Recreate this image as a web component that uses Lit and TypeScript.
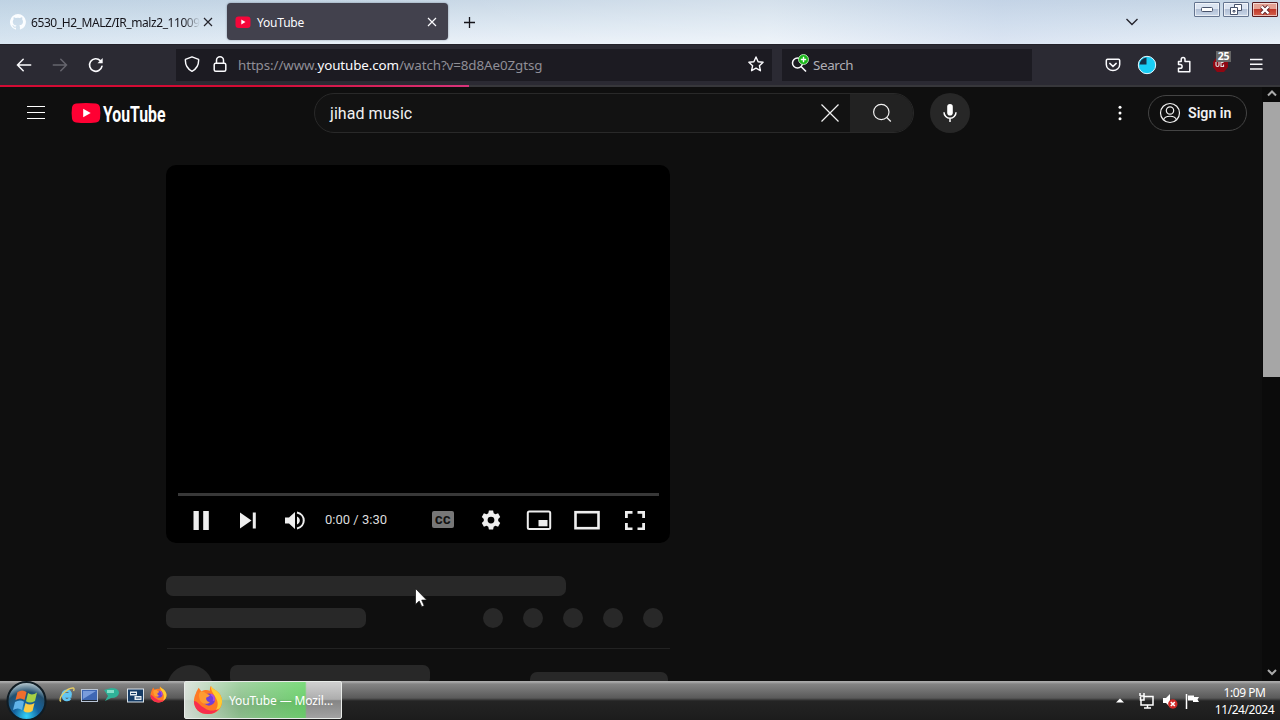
import { LitElement, html, css, svg } from 'lit';
import { customElement, property } from 'lit/decorators.js';

const ytBadge = html`
  <svg width="16" height="16" viewBox="0 0 16 16">
    <rect x="0.5" y="2.5" width="15" height="11.5" rx="3" fill="#f5063a" />
    <path d="M6.3 5.6v5l4.2-2.5z" fill="#fff" />
  </svg>
`;

const firefoxLogo = (size: number) => html`
  <svg width=${size} height=${size} viewBox="0 0 32 32">
    <path d="M3 9C4 6 5 5 6 3l3 4c3-2 6-2 9-1 0-2 0-3 1-5 2 3 4 4 6 5 4 3 6 7 6 11 0 8-6 14-15 14S1 25 1 17c0-3 1-6 2-8z" fill="#ff7a24" />
    <path d="M19 1c2 3 4 4 6 5 4 3 6 7 6 11 0 5-3 10-8 12 4-5 4-10 2-14-2-5-6-8-6-14z" fill="#ffcb30" />
    <path d="M1 17c0 8 6 14 15 14 5 0 9-2 12-6-5 3-11 3-15 0-6-3-8-8-12-8z" fill="#f72d4d" />
    <circle cx="17" cy="15.5" r="6.5" fill="#7140d8" />
    <path d="M7 8c2-2 5-1 7 1l4 2c-1 2-4 2-4 3 0 2 1 4 4 4-3 4-10 2-11-3-1-3-1-5 0-7z" fill="#ff9c30" />
    <path d="M19 10c3 1 4 4 3 7" fill="none" stroke="#b04de0" stroke-width="2" />
  </svg>
`;

@customElement('browser-chrome')
export class BrowserChrome extends LitElement {
  @property({ type: String }) search = 'Search';

  static styles = css`
    :host {
      display: block;
      font-family: 'Noto Sans', sans-serif;
    }

    svg {
      display: block;
      flex-shrink: 0;
    }

    .tabs {
      height: 44px;
      box-sizing: border-box;
      display: flex;
      background: linear-gradient(90deg, rgba(170, 200, 222, 0.25), rgba(255, 255, 255, 0) 30%, rgba(255, 255, 255, 0.25) 60%, rgba(190, 205, 232, 0.3) 78%, rgba(255, 255, 255, 0)),
        linear-gradient(#c6d6e5, #d9e5f0 55%, #e9f0f8);
    }

    .tab {
      box-sizing: border-box;
      height: 37px;
      margin-top: 3px;
      border-radius: 4px;
      display: flex;
      align-items: center;
      font-size: 12px;
      letter-spacing: -0.2px;
      color: #15141a;
      white-space: nowrap;
    }

    .tab.idle {
      width: 221px;
      padding: 0 9px 0 10px;
      margin-right: 6px;
      letter-spacing: -0.42px;
    }

    .tab.active {
      width: 221px;
      padding: 0 10px 0 8px;
      color: #fbfbfe;
      background: #42414d;
      box-shadow: 0 0 2px rgba(60, 70, 90, 0.6);
    }

    .title {
      flex: 1;
      padding-top: 2px;
      margin-left: 6px;
    }

    .idle .title {
      margin-left: 5px;
      margin-right: 3px;
      -webkit-mask-image: linear-gradient(90deg, #000 90%, transparent);
      mask-image: linear-gradient(90deg, #000 90%, transparent);
    }

    .new-tab {
      margin: 16px 0 0 15px;
    }

    .list-tabs {
      margin: 17px 55px 0 auto;
    }

    .window-buttons {
      display: flex;
      gap: 3px;
      padding: 2px 2px 0 0;
    }

    .window-buttons span {
      width: 26px;
      height: 15px;
      box-sizing: border-box;
      border: 1px solid #64748f;
      border-radius: 1px;
      box-shadow: inset 0 0 0 1px rgba(255, 255, 255, 0.6);
      background: linear-gradient(#dbe4f1 45%, #b2c0d6 50%, #c9d7e8);
      display: flex;
      align-items: center;
      justify-content: center;
    }

    .window-buttons .close {
      border-color: #571b20;
      background: linear-gradient(#e4a294 45%, #c2392a 50%, #d2604c);
    }

    .toolbar {
      height: 41px;
      box-sizing: border-box;
      border-top: 1px solid #232129;
      background: #2b2a33;
      display: flex;
      align-items: center;
      padding: 0 16px;
    }

    .nav {
      width: 160px;
      display: flex;
      gap: 20px;
    }

    .field {
      height: 32px;
      background: #1c1b22;
      display: flex;
      align-items: center;
      box-sizing: border-box;
      font-size: 13.4px;
      line-height: 20px;
      color: #8f8e96;
    }

    .field svg {
      position: relative;
      top: -1px;
    }

    .url {
      width: 596px;
      padding: 0 8px;
      margin-right: 10px;
    }

    .url svg + svg {
      margin-left: 12px;
    }

    .address {
      flex: 1;
      margin-left: 10px;
      letter-spacing: -0.11px;
    }

    .address b {
      font-weight: 400;
      color: #fbfbfe;
    }

    .search {
      width: 250px;
      padding: 0 8px;
      gap: 3px;
      color: #b0afb6;
      letter-spacing: -0.35px;
    }

    .actions {
      margin-left: auto;
      display: flex;
      align-items: center;
    }

    .actions svg,
    .blocker {
      margin-left: 16px;
    }

    .actions .puzzle {
      margin-left: 17px;
    }

    .blocker {
      position: relative;
      width: 20px;
      height: 20px;
      margin-right: 2px;
    }

    .blocker svg {
      margin: 0;
    }

    .badge {
      position: absolute;
      left: 6px;
      top: -4px;
      width: 15px;
      height: 11px;
      line-height: 11px;
      text-align: center;
      font-size: 10.5px;
      font-weight: 700;
      color: #fff;
      background: #666;
      letter-spacing: -0.3px;
    }

    .loading {
      height: 2px;
      background: #37373b;
    }

    .loading div {
      width: 469px;
      height: 2px;
      background: linear-gradient(90deg, #d30b34 55%, #d9347b);
    }
  `;

  render() {
    return html`
      <div class="tabs">
        <div class="tab idle">
          <svg width="16" height="16" viewBox="0 0 16 16">
            <path d="M8 0a8 8 0 0 0-2.5 15.6c.4.1.5-.2.5-.4v-1.5c-2.2.5-2.7-.9-2.9-1.3-.2-.4-.6-.8-.9-1 .8-.5 1.4.3 1.7.7.5.9 1.3.7 2.1.5.1-.6.3-.9.5-1.1-1.8-.3-3.7-1-3.7-4 0-.8.3-1.6.8-2.1 0-.5-.2-1.3.1-2.2 0 0 .7-.2 2.2.8a7.5 7.5 0 0 1 4 0c1.5-1 2.2-.8 2.2-.8.4.9.2 1.7.1 2.2.5.5.8 1.2.8 2.1 0 3-1.9 3.7-3.7 3.9.4.4.6.8.6 1.6v2.2c0 .2.1.5.5.4A8 8 0 0 0 8 0z" fill="#fbfdff" />
          </svg>
          <span class="title">6530_H2_MALZ/IR_malz2_11009</span>
          <svg width="10" height="10" viewBox="0 0 10 10"><path d="M1 1l8 8M9 1L1 9" stroke="#25242c" stroke-width="1.2" /></svg>
        </div>
        <div class="tab active">
          ${ytBadge}
          <span class="title">YouTube</span>
          <svg width="12" height="10" viewBox="0 0 12 10"><path d="M2 1l8 8M10 1L2 9" stroke="#fbfbfe" stroke-width="1.2" /></svg>
        </div>
        <svg class="new-tab" width="13" height="13" viewBox="0 0 13 13"><path d="M6.5 1v11M1 6.5h11" stroke="#15141a" stroke-width="1.3" /></svg>
        <svg class="list-tabs" width="14" height="10" viewBox="0 0 14 10"><path d="M1.5 2L7 7.5 12.5 2" fill="none" stroke="#25242c" stroke-width="1.4" /></svg>
        <div class="window-buttons">
          <span><svg width="12" height="5" viewBox="0 0 12 5"><rect x="0.5" y="0.5" width="11" height="4" rx="1" fill="#fff" stroke="#48536b" /></svg></span>
          <span>
            <svg width="12" height="11" viewBox="0 0 12 11">
              <path d="M4.5.5h7v6h-7z" fill="#fff" stroke="#48536b" />
              <path d="M.5 3.5h7v7h-7z" fill="#fff" stroke="#48536b" />
              <path d="M3 6.5h2V8H3z" fill="none" stroke="#48536b" />
            </svg>
          </span>
          <span class="close"><svg width="12" height="10" viewBox="0 0 12 10"><path d="M2.5 1.5l7 7M9.5 1.5l-7 7" stroke="#5b2329" stroke-width="4" /><path d="M2.5 1.5l7 7M9.5 1.5l-7 7" stroke="#fff" stroke-width="2.4" /></svg></span>
        </div>
      </div>
      <div class="toolbar">
        <div class="nav">
          <svg width="16" height="16" viewBox="0 0 16 16" fill="none" stroke="#fbfbfe" stroke-width="1.5" stroke-linecap="round"><path d="M1.5 8h13.2M7.2 2.2L1.5 8l5.7 5.8" /></svg>
          <svg width="16" height="16" viewBox="0 0 16 16" fill="none" stroke="#66656e" stroke-width="1.5" stroke-linecap="round"><path d="M1.3 8h13.2M8.8 2.2L14.5 8l-5.7 5.8" /></svg>
          <svg width="16" height="16" viewBox="0 0 16 16" fill="none" stroke="#fbfbfe" stroke-width="1.6" stroke-linecap="round">
            <path d="M14 9.2A6.3 6.3 0 1 1 12.3 3.6" />
            <path d="M14.7 1v5.2H9.5z" fill="#fbfbfe" stroke="none" />
          </svg>
        </div>
        <div class="field url">
          <svg width="16" height="16" viewBox="0 0 16 16" fill="none" stroke="#fbfbfe" stroke-width="1.4"><path d="M8 .8l6.6 2.5c.3 5-1.8 9.5-6.6 12-4.8-2.500-6.900-7-6.600-12z" stroke-linejoin="round" /></svg>
          <svg width="16" height="16" viewBox="0 0 16 16" fill="none" stroke="#fbfbfe" stroke-width="1.5"><rect x="2.2" y="7.2" width="11.6" height="8" rx="1.5" /><path d="M4.5 7V4.3a3.5 3.5 0 0 1 7 0V7" /></svg>
          <span class="address">https://www.<b>youtube.com</b>/watch?v=8d8Ae0Zgtsg</span>
          <svg width="16" height="16" viewBox="0 0 16 16" fill="none" stroke="#fbfbfe" stroke-width="1.4"><path d="M8 1l2.1 4.7 5 .5-3.7 3.5 1 5L8 12.2l-4.4 2.5 1-5L.9 6.2l5-.5z" stroke-linejoin="round" /></svg>
        </div>
        <div class="field search">
          <svg width="20" height="20" viewBox="0 0 20 20" fill="none">
            <circle cx="7.5" cy="9" r="5" stroke="#fbfbfe" stroke-width="1.5" />
            <path d="M11 12.5l5 5" stroke="#fbfbfe" stroke-width="1.6" />
            <circle cx="13.5" cy="5.5" r="5" fill="#18b818" stroke="#d6f5d6" stroke-width="0.8" />
            <path d="M13.5 2.8v5.4M10.8 5.5h5.4" stroke="#fff" stroke-width="1.4" />
          </svg>
          <span>${this.search}</span>
        </div>
        <div class="actions">
          <svg width="16" height="16" viewBox="0 0 16 16" fill="none" stroke="#fbfbfe" stroke-width="1.5" stroke-linecap="round"><path d="M2.500 2.200h11c.7 0 1.200.5 1.200 1.200v4a6.700 6.200 0 0 1-13.400 0v-4c0-.7.5-1.200 1.200-1.200z" /><path d="M4.800 6.400L8 9.400l3.200-3" /></svg>
          <svg width="20" height="20" viewBox="0 0 20 20">
            <circle cx="10" cy="10" r="8.700" fill="#18cdf5" stroke="#e9f9ff" stroke-width="1" />
            <path d="M9.500 9.500V2.500a7.500 7.500 0 0 0-7 7z" fill="#143148" />
          </svg>
          <svg class="puzzle" width="20" height="20" viewBox="0 0 20 20" fill="none" stroke="#fbfbfe" stroke-width="1.5" stroke-linejoin="round"><path d="M7.200 6.500V4.500a1.900 1.900 0 0 1 3.800 0v2h4.800v10.300H4.500v-3.500h1.700a1.900 1.900 0 0 0 0-3.800H4.500v-3z" /></svg>
          <div class="blocker">
            <svg width="20" height="20" viewBox="0 0 20 20"><path d="M6 3h8l4 4v5l-4 5H7l-4-5V7z" fill="#8f0712" /><path d="M6 7v3q0 1.500 1.500 1.500T9 10V7M13.500 7.500H11v4h2.500V9.500" fill="none" stroke="#ddd" stroke-width="1.200" /></svg>
            <span class="badge">25</span>
          </div>
          <svg width="16" height="16" viewBox="0 0 16 16" stroke="#fbfbfe" stroke-width="1.500"><path d="M2 2.500h12.500M2 7.200h12.500M2 12h12.500" /></svg>
        </div>
      </div>
      <div class="loading"><div></div></div>
    `;
  }
}

const icons = {
  pause: svg`<path d="M4.500 3h5.300v19H4.500zM14.200 3h5.600v19h-5.600z" />`,
  next: svg`<path d="M4 4.500l11.500 8L4 20.500zM16.800 4.500h3v16h-3z" />`,
  volume: svg`<path d="M2 9.500v6h4l6 5.500V4L6 9.500zM14 8.500v8c3.800-1.400 3.800-6.600 0-8z" /><path d="M14 4.600c9 1.800 9 14 0 15.800" fill="none" stroke="#eee" stroke-width="2" />`,
  settings: svg`<path fill-rule="evenodd" d="M9.900 2.500h4.200l.6 2.700 1.700 1 2.700-.9 2.100 3.700-2 1.900v2.200l2 1.900-2.100 3.700-2.700-.9-1.700 1-.6 2.700H9.900l-.6-2.700-1.700-1-2.700.9L2.800 15l2-1.900v-2.200L2.800 9l2.100-3.700 2.700.9 1.700-1zM12 8.700a3.400 3.400 0 1 0 0 6.800 3.400 3.400 0 0 0 0-6.800z" />`,
  miniplayer: svg`<rect x="0.800" y="3.500" width="22.400" height="17.500" rx="1.500" fill="none" stroke="#eee" stroke-width="2" /><path d="M11.500 12h9v6.300h-9z" />`,
  theater: svg`<rect x="0.500" y="4.200" width="23" height="16" fill="none" stroke="#eee" stroke-width="2.600" />`,
  fullscreen: svg`<path d="M2 3h7.500v2.700H4.800v4.300H2zM14.500 3H22v7h-2.800V5.700h-4.700zM2 15h2.800v4.500h4.700V22H2zM19.200 15H22v7h-7.500v-2.500h4.700z" />`,
};

@customElement('watch-page')
export class WatchPage extends LitElement {
  @property({ type: String }) query = '';
  @property({ type: String }) time = '0:00 / 3:30';

  static styles = css`
    :host {
      display: flex;
      background: #0f0f0f;
      font-family: Roboto, sans-serif;
      color: #f1f1f1;
      overflow: hidden;
    }

    svg {
      display: block;
      flex-shrink: 0;
      overflow: visible;
    }

    main {
      flex: 1;
      min-width: 0;
    }

    header {
      height: 52px;
      display: flex;
      align-items: center;
      padding: 0 15px 0 26px;
    }

    .logo {
      margin-left: 25px;
    }

    .logo text {
      font: 700 22px Roboto, sans-serif;
    }

    .searchbox {
      margin-left: 147px;
      width: 600px;
      height: 40px;
      box-sizing: border-box;
      border: 1px solid #292929;
      border-radius: 20px;
      display: flex;
      align-items: center;
      background: #121212;
      overflow: hidden;
    }

    .query {
      flex: 1;
      padding-left: 15px;
      font-size: 16px;
      letter-spacing: 0.06px;
    }

    .go {
      width: 63px;
      height: 40px;
      margin-left: 10px;
      background: #222;
      display: flex;
      align-items: center;
      justify-content: center;
    }

    .mic {
      width: 40px;
      height: 40px;
      margin: 0 auto 0 16px;
      border-radius: 50%;
      background: #272727;
      display: flex;
      align-items: center;
      justify-content: center;
    }

    .signin {
      box-sizing: border-box;
      width: 99px;
      height: 36px;
      margin-left: 26px;
      border: 1px solid #444;
      border-radius: 18px;
      display: flex;
      align-items: center;
      gap: 7px;
      padding-left: 10px;
      font-size: 14.2px;
      font-weight: 600;
      white-space: nowrap;
    }

    .watch {
      width: 504px;
      margin: 26px 0 0 166px;
    }

    .player {
      height: 378px;
      box-sizing: border-box;
      border-radius: 10px;
      background: #000;
      display: flex;
      flex-direction: column;
      justify-content: flex-end;
      padding: 0 11px 0 12px;
    }

    .seek {
      height: 3px;
      background: #383838;
    }

    .controls {
      height: 47px;
      display: flex;
      align-items: center;
    }

    .control {
      width: 48px;
      display: flex;
      justify-content: center;
      fill: #eee;
    }

    .control.left {
      width: 46.7px;
    }

    .time {
      flex: 1;
      margin-left: 7px;
      font-size: 13px;
      color: #ddd;
    }

    .cc {
      width: 22px;
      height: 17px;
      border-radius: 2px;
      background: #777;
      color: #111;
      font-size: 11.5px;
      line-height: 18px;
      font-weight: 900;
      letter-spacing: 0.5px;
      text-align: center;
    }

    .row {
      display: flex;
      align-items: center;
    }

    .bone {
      background: #282828;
      border-radius: 7px;
      height: 20px;
    }

    .headline {
      width: 400px;
      margin-top: 33px;
    }

    .views {
      width: 200px;
      margin-right: auto;
    }

    .meta {
      margin-top: 12px;
      gap: 20px;
      padding-right: 7px;
    }

    .dot {
      width: 20px;
      height: 20px;
      border-radius: 50%;
      background: #282828;
    }

    .channel {
      margin: 20px 0 0 1px;
      border-top: 1px solid #222;
      padding-top: 16px;
      align-items: flex-start;
    }

    .avatar {
      width: 46px;
      height: 46px;
      border-radius: 50%;
      background: #282828;
    }

    .name {
      width: 200px;
      margin: 0 auto 0 17px;
    }

    .subscribe {
      width: 138px;
      height: 36px;
      margin: 7px 2px 0 0;
    }

    .scroll {
      width: 18px;
      background: #0b0b0b;
      display: flex;
      flex-direction: column;
      align-items: flex-end;
    }

    .thumb {
      width: 17px;
      height: 275px;
      margin: 2px 0 auto;
      background: #a6a6a6;
    }

    .arrow {
      margin-right: 2px;
      fill: none;
      stroke: #aaa;
      stroke-width: 2;
    }
  `;

  private icon(name: keyof typeof icons, side = '') {
    return html`<div class="control ${side}"><svg width="24" height="24" viewBox="0 0 24 24">${icons[name]}</svg></div>`;
  }

  render() {
    return html`
      <main>
        <header>
          <svg width="20" height="16" viewBox="0 0 20 16" stroke="#fff" stroke-width="1"><path d="M1 1.500h18M1 7.500h18M1 13.500h18" /></svg>
          <svg class="logo" width="96" height="24" viewBox="0 0 96 24">
            <path d="M5 2.500Q15 1.500 25 2.500 28.500 3 29 6.500 29.800 12 29 17.500 28.500 21 25 21.500 15 22.500 5 21.500 1.500 21 1 17.500.2 12 1 6.500 1.500 3 5 2.500z" fill="#ff0033" />
            <path d="M12.200 7.800v8.400l7.500-4.200z" fill="#fff" />
            <text x="32" y="20.500" textLength="62.500" lengthAdjust="spacingAndGlyphs" fill="#fff">YouTube</text>
          </svg>
          <div class="searchbox">
            <span class="query">${this.query}</span>
            <svg width="20" height="20" viewBox="0 0 20 20" stroke="#f1f1f1" stroke-width="1.200"><path d="M1.500 1.500l17 17M18.500 1.500l-17 17" /></svg>
            <div class="go"><svg width="20" height="20" viewBox="0 0 20 20" fill="none" stroke="#f1f1f1" stroke-width="1.200"><circle cx="9.300" cy="9" r="7.700" /><path d="M14.800 14.500l4 4" /></svg></div>
          </div>
          <div class="mic">
            <svg width="20" height="20" viewBox="0 0 20 20"><rect x="7.200" y="1" width="5.600" height="11.500" rx="2.800" fill="#fff" /><path d="M4 9.300a6 6 0 0 0 12 0M10 15.500V19" fill="none" stroke="#fff" stroke-width="1.500" /></svg>
          </div>
          <svg width="4" height="16" viewBox="0 0 4 16" fill="#fff"><circle cx="2" cy="2.300" r="1.500" /><circle cx="2" cy="8" r="1.500" /><circle cx="2" cy="13.700" r="1.500" /></svg>
          <div class="signin">
            <svg width="22" height="22" viewBox="0 0 22 22" fill="none" stroke="#f1f1f1" stroke-width="1.200"><circle cx="11" cy="11" r="9.500" /><circle cx="11" cy="8.500" r="3.700" /><path d="M4.500 18c1.500-5 11.500-5 13 0" /></svg>
            Sign in
          </div>
        </header>
        <div class="watch">
          <div class="player">
            <div class="seek"></div>
            <div class="controls">
              ${this.icon('pause', 'left')} ${this.icon('next', 'left')} ${this.icon('volume', 'left')}
              <span class="time">${this.time}</span>
              <div class="control"><span class="cc">CC</span></div>
              ${this.icon('settings')} ${this.icon('miniplayer')} ${this.icon('theater')} ${this.icon('fullscreen')}
            </div>
          </div>
          <div class="bone headline"></div>
          <div class="row meta">
            <div class="bone views"></div>
            ${[1, 2, 3, 4, 5].map(() => html`<div class="dot"></div>`)}
          </div>
          <div class="row channel">
            <div class="avatar"></div>
            <div class="bone name"></div>
            <div class="bone subscribe"></div>
          </div>
        </div>
      </main>
      <div class="scroll">
        <svg class="arrow" width="12" height="13" viewBox="0 0 12 13"><path d="M2 8.500l4-4 4 4" /></svg>
        <div class="thumb"></div>
        <svg class="arrow" width="12" height="17" viewBox="0 0 12 17"><path d="M2 6l4 4 4-4" /></svg>
      </div>
    `;
  }
}

@customElement('task-bar')
export class TaskBar extends LitElement {
  @property({ type: String }) clock = '1:09 PM';
  @property({ type: String }) date = '11/24/2024';

  static styles = css`
    :host {
      display: flex;
      box-sizing: border-box;
      font-family: 'Noto Sans', sans-serif;
      font-size: 12px;
      color: #fff;
      background: linear-gradient(#aaa 0, #aaa 1px, #848484 3px, #5a5a5a 17px, #242424 20px, #1c1c1c);
    }

    svg {
      display: block;
      flex-shrink: 0;
    }

    .start {
      margin-left: 6px;
    }

    .quick {
      display: flex;
      gap: 6px;
      margin: 5px 0 0 11px;
      width: 126px;
    }

    .task {
      box-sizing: border-box;
      width: 158px;
      height: 38px;
      border: 1px solid #e9ece9;
      border-radius: 2px;
      display: flex;
      align-items: center;
      gap: 6px;
      padding-left: 8px;
      white-space: pre;
      letter-spacing: -0.12px;
      background: linear-gradient(90deg, rgba(225, 235, 225, 0.8), rgba(120, 215, 120, 0.5) 35%, rgba(80, 225, 80, 0.65) 77%, transparent 78%),
        linear-gradient(#d0d0d0, #adadad 48%, #858585 52%, #a2a2a2);
    }

    .tray {
      margin-left: auto;
      display: flex;
      align-items: center;
      gap: 7px;
    }

    .clock {
      width: 71px;
      margin-left: 1px;
      text-align: center;
      line-height: 17px;
      letter-spacing: -0.45px;
    }
  `;

  render() {
    return html`
      <svg class="start" width="41" height="39" viewBox="0 0 41 39">
        <defs>
          <radialGradient id="orb" cx="50%" cy="90%" r="85%">
            <stop offset="0" stop-color="#32d4fa" />
            <stop offset="0.400" stop-color="#14639f" />
            <stop offset="0.750" stop-color="#23506f" />
            <stop offset="1" stop-color="#a7bcc6" />
          </radialGradient>
        </defs>
        <circle cx="20.500" cy="20" r="19" fill="url(#orb)" stroke="#101c24" stroke-width="2" />
        <path d="M11.500 11q5-3 9 0l-2 8q-4-3-9 0z" fill="#ef6d2d" />
        <path d="M22 12q4 3 9-.5l-2 8.500q-5 3-9 .2z" fill="#a5cf45" />
        <path d="M9 21q5-3 9-.2l-2 8.200q-4-3-9 0z" fill="#60b3e9" />
        <path d="M19.500 22q4 3 9 0l-2 8q-5 3-9 0z" fill="#fccb42" />
      </svg>
      <div class="quick">
        <svg width="17" height="17" viewBox="0 0 17 17" fill="none">
          <path d="M13.500 10.500H5.200c.4 4 5.300 4.500 7 1.800M4.800 8.300c.8-4.800 8.200-4.600 7.800 0z" stroke="#62c6f3" stroke-width="2.600" />
          <path d="M3 15.500C-1 13 8 2 15 2c2 .2.500 3 .5 3" stroke="#e6ce65" stroke-width="1.300" />
        </svg>
        <svg width="17" height="17" viewBox="0 0 17 17"><rect x="0.500" y="3.500" width="16" height="12" fill="#3e67b4" stroke="#b9c5d6" /><path d="M2 5h13L2 13z" fill="#799cdc" /><path d="M1 14.500h15" stroke="#1c222b" /></svg>
        <svg width="17" height="17" viewBox="0 0 17 17"><path d="M0 4l7-2q8 0 8 5-1 5-8 5l-6 3 3-5z" fill="#2fb298" /><path d="M3 4h7v3H3z" fill="#85dfc9" /></svg>
        <svg width="17" height="17" viewBox="0 0 17 17"><rect x="0.500" y="3" width="16" height="13" fill="#163c66" stroke="#d9e2e9" /><path d="M3 5.500h7v4H3zM7.500 10h7v4h-7z" fill="#e9eef2" /><path d="M4 7.500h5M9 12h4.500" stroke="#163c66" /></svg>
        ${firefoxLogo(17)}
      </div>
      <div class="task">${firefoxLogo(30)}<span>YouTube — Mozil...</span></div>
      <div class="tray">
        <svg width="8" height="6" viewBox="0 0 8 6"><path d="M0 4.500l4-4 4 4z" fill="#fff" /></svg>
        <svg width="24" height="18" viewBox="0 0 24 18" fill="none" stroke="#fff" stroke-width="1.500"><path d="M13 4.500h9v8.500h-12V8M13 16h7M16.500 13v3" /><path d="M9 1v3M13 1v3M9 4h4v4H9.500V5" /></svg>
        <svg width="16" height="18" viewBox="0 0 16 18"><path d="M1 6h3l4-4v13l-4-4H1z" fill="#fff" /><circle cx="10.800" cy="12" r="4.700" fill="#cf2926" /><path d="M8.800 10l4 4M12.800 10l-4 4" stroke="#fff" stroke-width="1.600" /></svg>
        <svg width="16" height="18" viewBox="0 0 16 18"><path d="M1.500 2v15" stroke="#fff" stroke-width="1.500" /><path d="M3 3.500h6V5h5l-1.500 2.500L14 10H8V8.500H3z" fill="#fff" /></svg>
        <div class="clock">${this.clock}<br />${this.date}</div>
      </div>
    `;
  }
}

@customElement('app-root')
export class AppRoot extends LitElement {
  static styles = css`
    :host {
      position: relative;
      display: flex;
      flex-direction: column;
      width: 1280px;
      height: 720px;
      overflow: hidden;
      background: #0f0f0f;
    }

    watch-page {
      flex: 1;
      min-height: 0;
    }

    task-bar {
      height: 39px;
    }

    .cursor {
      position: absolute;
      left: 415px;
      top: 588px;
    }
  `;

  render() {
    return html`
      <browser-chrome></browser-chrome>
      <watch-page query="jihad music"></watch-page>
      <task-bar></task-bar>
      <svg class="cursor" width="12" height="20" viewBox="0 0 12 20">
        <path d="M.5.500v16l3.700-3.500 2.600 5.700 2.400-1-2.500-5.600h5z" fill="#fff" stroke="#111" stroke-width="0.700" />
      </svg>
    `;
  }
}

declare global {
  interface HTMLElementTagNameMap {
    'app-root': AppRoot;
    'browser-chrome': BrowserChrome;
    'watch-page': WatchPage;
    'task-bar': TaskBar;
  }
}
